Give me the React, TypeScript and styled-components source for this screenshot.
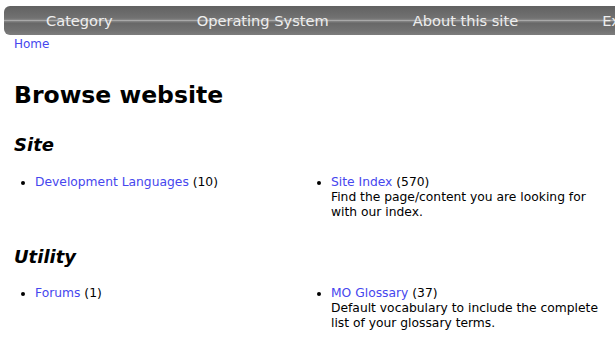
import styled, { createGlobalStyle } from 'styled-components'

const GlobalStyle = createGlobalStyle`
  html, body {
    margin: 0;
    padding: 0;
    background: #fff;
    overflow: hidden;
  }
  body {
    font-family: "DejaVu Sans", Verdana, sans-serif;
    color: #000;
  }
`

const Page = styled.div`
  width: 615px;
  overflow: hidden;
`

const NavBar = styled.nav`
  display: flex;
  margin: 6px 0 0 4px;
  width: 720px;
  height: 29px;
  border-radius: 6px 0 0 6px;
  background: linear-gradient(
    to bottom,
    #616161 0%,
    #717171 40%,
    #7c7c7c 46%,
    #a9a9a9 50%,
    #7a7a7a 54%,
    #686868 60%,
    #727272 85%,
    #7d7d7d 100%
  );
  white-space: nowrap;
`

const NavItem = styled.a`
  display: flex;
  align-items: center;
  padding: 0 42px;
  font-size: 14.6px;
  color: #eeeeee;
  text-decoration: none;
`

const Content = styled.main`
  padding: 0 14px;
`

const Crumb = styled.a`
  display: block;
  margin-top: 2px;
  font-size: 12px;
  line-height: 15px;
  color: #4646ee;
  text-decoration: none;
`

const Title = styled.h1`
  margin: 29px 0 0;
  font-size: 23.5px;
  font-weight: bold;
  line-height: 28px;
`

const SectionTitle = styled.h2`
  margin: 0;
  font-size: 18px;
  font-weight: bold;
  font-style: italic;
  line-height: 22px;
`

const Section = styled.section<{ gap: number }>`
  margin-top: ${p => p.gap}px;
`

const Columns = styled.div<{ offset: number }>`
  display: grid;
  grid-template-columns: 296px 1fr;
  margin-top: ${p => p.offset}px;
`

const List = styled.ul`
  margin: 0;
  padding-left: 21px;
  font-size: 12.3px;
  line-height: 15px;
`

const Link = styled.a`
  color: #4646ee;
  text-decoration: none;
`

const Note = styled.div`
  color: #000;
`

type Entry = { name: string; count: number; note?: string }

const sections: { title: string; gap: number; offset: number; items: Entry[] }[] = [
  {
    title: 'Site',
    gap: 25,
    offset: 19,
    items: [
      { name: 'Development Languages', count: 10 },
      { name: 'Site Index', count: 570, note: 'Find the page/content you are looking for with our index.' },
    ],
  },
  {
    title: 'Utility',
    gap: 26,
    offset: 18,
    items: [
      { name: 'Forums', count: 1 },
      { name: 'MO Glossary', count: 37, note: 'Default vocabulary to include the complete list of your glossary terms.' },
    ],
  },
]

const App = () => {
  return (
    <Page>
      <GlobalStyle />
      <NavBar>
        <NavItem href="#">Category</NavItem>
        <NavItem href="#">Operating System</NavItem>
        <NavItem href="#">About this site</NavItem>
        <NavItem href="#">Extras</NavItem>
      </NavBar>
      <Content>
        <Crumb href="#">Home</Crumb>
        <Title>Browse website</Title>
        {sections.map(s => (
          <Section key={s.title} gap={s.gap}>
            <SectionTitle>{s.title}</SectionTitle>
            <Columns offset={s.offset}>
              {s.items.map(item => (
                <List key={item.name}>
                  <li>
                    <Link href="#">{item.name}</Link> ({item.count})
                    {item.note && <Note>{item.note}</Note>}
                  </li>
                </List>
              ))}
            </Columns>
          </Section>
        ))}
      </Content>
    </Page>
  )
}

export default App
